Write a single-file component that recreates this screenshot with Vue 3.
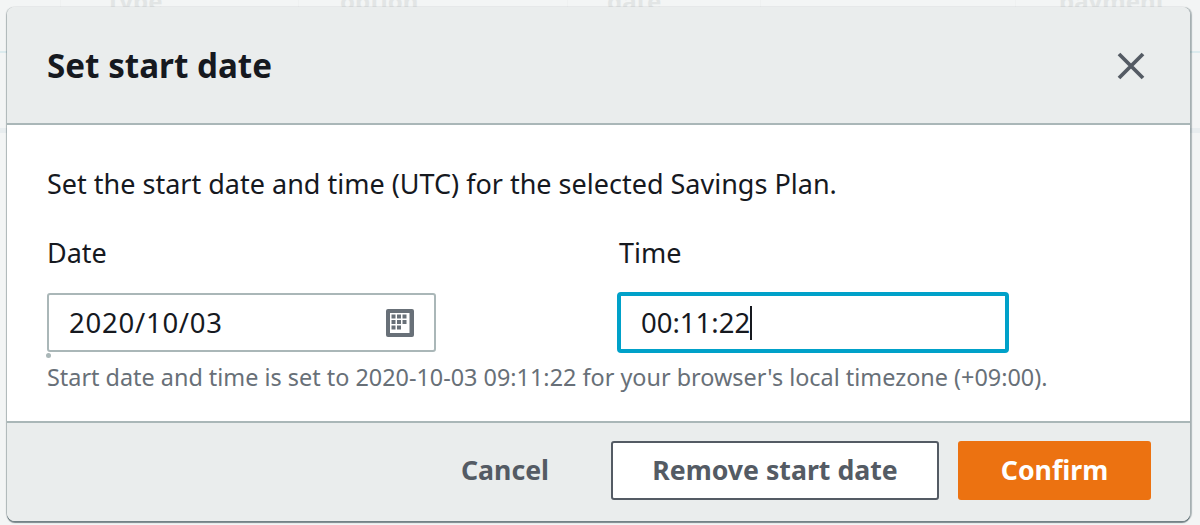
<script setup>
const backdropColumns = ['Type', 'option', 'date', 'payment']
const dividers = [60, 298, 567, 760, 1015]
const rules = [51, 128]
</script>

<template>
  <div class="page">
    <div class="backdrop" aria-hidden="true">
      <span v-for="c in backdropColumns" :key="c" class="bd-col">{{ c }}</span>
      <i v-for="x in dividers" :key="x" class="bd-div" :style="{ left: x + 'px' }"></i>
      <i v-for="y in rules" :key="y" class="bd-rule" :style="{ top: y + 'px' }"></i>
    </div>
    <section class="modal">
      <header class="head">
        <h2 class="title">Set start date</h2>
        <svg class="close" viewBox="0 0 28 28" width="28" height="28">
          <path d="M2 2 L26 26 M26 2 L2 26" fill="none" stroke="#545b64" stroke-width="3.8" />
        </svg>
      </header>
      <div class="body">
        <p class="intro">Set the start date and time (UTC) for the selected Savings Plan.</p>
        <div class="fields">
          <div class="field date">
            <label class="label">Date</label>
            <div class="input">
              <span class="value spaced">2020/10/03</span>
              <svg class="cal" viewBox="0 0 28 28" width="28" height="28">
                <rect x="0" y="0" width="28" height="28" rx="2" fill="#687078" />
                <rect x="4" y="4" width="19.5" height="20" fill="#fff" />
                <g fill="#687078">
                  <rect x="5.5" y="5.5" width="4" height="4" /><rect x="11" y="5.5" width="4" height="4" /><rect x="16.5" y="5.5" width="4" height="4" />
                  <rect x="5.5" y="11" width="4" height="4" /><rect x="11" y="11" width="4" height="4" /><rect x="16.5" y="11" width="4" height="4" />
                  <rect x="5.5" y="16.5" width="4" height="4" /><rect x="11" y="16.5" width="4" height="4" />
                </g>
              </svg>
            </div>
            <span class="dot"></span>
          </div>
          <div class="field time">
            <label class="label">Time</label>
            <div class="input focus">
              <span class="value">00:11:22</span><span class="caret"></span>
            </div>
          </div>
        </div>
        <p class="hint">Start date and time is set to 2020-10-03 09:11:22 for your browser's local timezone (+09:00).</p>
      </div>
      <footer class="foot">
        <span class="btn link">Cancel</span>
        <span class="btn normal">Remove start date</span>
        <span class="btn primary">Confirm</span>
      </footer>
    </section>
  </div>
</template>

<style>
html, body { margin: 0; background: #f3f5f5; overflow: hidden; }
</style>

<style scoped>
.page {
  position: relative;
  width: 1200px;
  height: 525px;
  box-sizing: border-box;
  padding: 7px 10px 0 7px;
  font-family: "Noto Sans", sans-serif;
  color: #16191f;
  background: #f3f5f5;
  overflow: hidden;
}
.backdrop {
  position: absolute;
  inset: 0;
  font-size: 24px;
  font-weight: 700;
  color: #e2e5e5;
}
.bd-col { position: absolute; top: -14px; line-height: 30px; }
.bd-col:nth-child(1) { left: 106px; }
.bd-col:nth-child(2) { left: 340px; }
.bd-col:nth-child(3) { left: 607px; }
.bd-col:nth-child(4) { left: 1059px; }
.bd-div {
  position: absolute;
  top: 0;
  width: 1px;
  height: 7px;
  background: #eff1f1;
}
.bd-rule {
  position: absolute;
  left: 0;
  right: 0;
  height: 2px;
  background: #dcebee;
}
.bd-rule:last-child { background: #e8edef; height: 5px; }
.modal {
  position: relative;
  height: 514px;
  border-radius: 8px;
  display: flex;
  flex-direction: column;
  background: #fff;
  box-shadow: 0 2px 1px 0 rgba(0, 28, 36, 0.5), 1.5px 0 1px 0 rgba(0, 28, 36, 0.28), -1px 0 1px 0 rgba(0, 28, 36, 0.25);
  overflow: hidden;
}
.head {
  flex: none;
  background: #eaeded;
  border-bottom: 2px solid #aab7b8;
  display: flex;
  align-items: center;
  justify-content: space-between;
  padding: 2px 45px 0 40px;
  box-sizing: border-box;
  height: 118px;
}
.title {
  margin: 0;
  font-size: 33.2px;
  font-weight: 700;
  line-height: 40px;
}
.close { display: block; }
.body {
  flex: 1;
  padding: 41px 40px 0;
}
.intro {
  margin: 0;
  font-size: 27px;
  line-height: 36px;
}
.fields {
  display: flex;
  margin-top: 33px;
}
.field.date { width: 572px; position: relative; }
.field.time { flex: 1; }
.label {
  display: block;
  font-size: 27px;
  line-height: 36px;
}
.input {
  margin-top: 22px;
  height: 59px;
  box-sizing: border-box;
  border: 2px solid #aab7b8;
  border-radius: 3px;
  display: flex;
  align-items: center;
  padding: 0 20px;
  font-size: 27.5px;
}
.spaced { letter-spacing: 0.75px; }
.dot {
  position: absolute;
  left: -1px;
  bottom: -5px;
  width: 5px;
  height: 5px;
  border-radius: 50%;
  background: #aab7b8;
}
.date .input {
  width: 389px;
  justify-content: space-between;
}
.time .input {
  width: 392px;
  height: 61px;
  margin-top: 21px;
  margin-left: -2px;
  border: 4px solid #00a1c9;
  border-radius: 4px;
}
.cal { display: block; }
.caret {
  width: 2px;
  height: 34px;
  background: #16191f;
}
.hint {
  margin: 0;
  padding-top: 9px;
  font-size: 23.4px;
  line-height: 30px;
  color: #687078;
}
.foot {
  flex: none;
  height: 100px;
  box-sizing: border-box;
  background: #eaeded;
  border-top: 2px solid #aab7b8;
  display: flex;
  align-items: center;
  justify-content: flex-end;
  padding: 0 39px 4px 0;
}
.btn {
  box-sizing: border-box;
  height: 59px;
  padding-bottom: 2px;
  display: flex;
  align-items: center;
  justify-content: center;
  font-size: 26.7px;
  font-weight: 700;
  border-radius: 3px;
}
.link { color: #545b64; width: 148px; margin-right: 32px; }
.normal {
  width: 328px;
  background: #fff;
  color: #545b64;
  border: 2px solid #545b64;
  margin-right: 19px;
}
.primary {
  width: 193px;
  background: #ec7211;
  color: #fff;
}
</style>
